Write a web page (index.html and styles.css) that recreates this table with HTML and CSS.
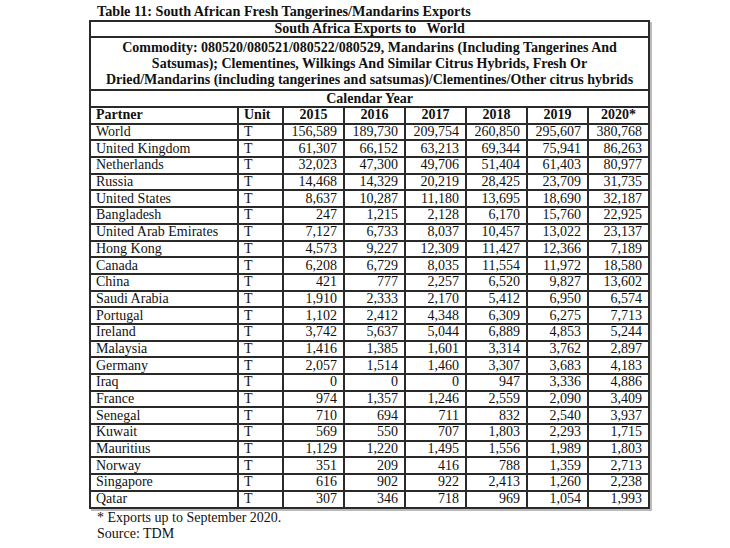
FILE: index.html
```html
<!DOCTYPE html>
<html>
<head>
<meta charset="utf-8">
<link rel="stylesheet" href="styles.css">
</head>
<body>
<div class="page">
  <div class="title">Table 11: South African Fresh Tangerines/Mandarins Exports</div>
  <table class="data">
    <colgroup>
      <col class="c-partner"><col class="c-unit"><col class="c-num"><col class="c-num"><col class="c-num"><col class="c-num"><col class="c-num"><col class="c-num">
    </colgroup>
    <tr class="r-top"><th colspan="8">South Africa Exports to&nbsp;&nbsp; World</th></tr>
    <tr class="r-comm"><th colspan="8">Commodity: 080520/080521/080522/080529, Mandarins (Including Tangerines And<br>Satsumas); Clementines, Wilkings And Similar Citrus Hybrids, Fresh Or<br>Dried/Mandarins (including tangerines and satsumas)/Clementines/Other citrus hybrids</th></tr>
    <tr class="r-cal"><th colspan="8">Calendar Year</th></tr>
    <tr class="r-head"><th class="left">Partner</th><th class="left">Unit</th><th>2015</th><th>2016</th><th>2017</th><th>2018</th><th>2019</th><th>2020*</th></tr>
    <tr><td>World</td><td>T</td><td class="n">156,589</td><td class="n">189,730</td><td class="n">209,754</td><td class="n">260,850</td><td class="n">295,607</td><td class="n">380,768</td></tr>
    <tr><td>United Kingdom</td><td>T</td><td class="n">61,307</td><td class="n">66,152</td><td class="n">63,213</td><td class="n">69,344</td><td class="n">75,941</td><td class="n">86,263</td></tr>
    <tr><td>Netherlands</td><td>T</td><td class="n">32,023</td><td class="n">47,300</td><td class="n">49,706</td><td class="n">51,404</td><td class="n">61,403</td><td class="n">80,977</td></tr>
    <tr><td>Russia</td><td>T</td><td class="n">14,468</td><td class="n">14,329</td><td class="n">20,219</td><td class="n">28,425</td><td class="n">23,709</td><td class="n">31,735</td></tr>
    <tr><td>United States</td><td>T</td><td class="n">8,637</td><td class="n">10,287</td><td class="n">11,180</td><td class="n">13,695</td><td class="n">18,690</td><td class="n">32,187</td></tr>
    <tr><td>Bangladesh</td><td>T</td><td class="n">247</td><td class="n">1,215</td><td class="n">2,128</td><td class="n">6,170</td><td class="n">15,760</td><td class="n">22,925</td></tr>
    <tr><td>United Arab Emirates</td><td>T</td><td class="n">7,127</td><td class="n">6,733</td><td class="n">8,037</td><td class="n">10,457</td><td class="n">13,022</td><td class="n">23,137</td></tr>
    <tr><td>Hong Kong</td><td>T</td><td class="n">4,573</td><td class="n">9,227</td><td class="n">12,309</td><td class="n">11,427</td><td class="n">12,366</td><td class="n">7,189</td></tr>
    <tr><td>Canada</td><td>T</td><td class="n">6,208</td><td class="n">6,729</td><td class="n">8,035</td><td class="n">11,554</td><td class="n">11,972</td><td class="n">18,580</td></tr>
    <tr><td>China</td><td>T</td><td class="n">421</td><td class="n">777</td><td class="n">2,257</td><td class="n">6,520</td><td class="n">9,827</td><td class="n">13,602</td></tr>
    <tr><td>Saudi Arabia</td><td>T</td><td class="n">1,910</td><td class="n">2,333</td><td class="n">2,170</td><td class="n">5,412</td><td class="n">6,950</td><td class="n">6,574</td></tr>
    <tr><td>Portugal</td><td>T</td><td class="n">1,102</td><td class="n">2,412</td><td class="n">4,348</td><td class="n">6,309</td><td class="n">6,275</td><td class="n">7,713</td></tr>
    <tr><td>Ireland</td><td>T</td><td class="n">3,742</td><td class="n">5,637</td><td class="n">5,044</td><td class="n">6,889</td><td class="n">4,853</td><td class="n">5,244</td></tr>
    <tr><td>Malaysia</td><td>T</td><td class="n">1,416</td><td class="n">1,385</td><td class="n">1,601</td><td class="n">3,314</td><td class="n">3,762</td><td class="n">2,897</td></tr>
    <tr><td>Germany</td><td>T</td><td class="n">2,057</td><td class="n">1,514</td><td class="n">1,460</td><td class="n">3,307</td><td class="n">3,683</td><td class="n">4,183</td></tr>
    <tr><td>Iraq</td><td>T</td><td class="n">0</td><td class="n">0</td><td class="n">0</td><td class="n">947</td><td class="n">3,336</td><td class="n">4,886</td></tr>
    <tr><td>France</td><td>T</td><td class="n">974</td><td class="n">1,357</td><td class="n">1,246</td><td class="n">2,559</td><td class="n">2,090</td><td class="n">3,409</td></tr>
    <tr><td>Senegal</td><td>T</td><td class="n">710</td><td class="n">694</td><td class="n">711</td><td class="n">832</td><td class="n">2,540</td><td class="n">3,937</td></tr>
    <tr><td>Kuwait</td><td>T</td><td class="n">569</td><td class="n">550</td><td class="n">707</td><td class="n">1,803</td><td class="n">2,293</td><td class="n">1,715</td></tr>
    <tr><td>Mauritius</td><td>T</td><td class="n">1,129</td><td class="n">1,220</td><td class="n">1,495</td><td class="n">1,556</td><td class="n">1,989</td><td class="n">1,803</td></tr>
    <tr><td>Norway</td><td>T</td><td class="n">351</td><td class="n">209</td><td class="n">416</td><td class="n">788</td><td class="n">1,359</td><td class="n">2,713</td></tr>
    <tr><td>Singapore</td><td>T</td><td class="n">616</td><td class="n">902</td><td class="n">922</td><td class="n">2,413</td><td class="n">1,260</td><td class="n">2,238</td></tr>
    <tr><td>Qatar</td><td>T</td><td class="n">307</td><td class="n">346</td><td class="n">718</td><td class="n">969</td><td class="n">1,054</td><td class="n">1,993</td></tr>
  </table>
  <div class="notes">
    <div>* Exports up to September 2020.</div>
    <div>Source: TDM</div>
  </div>
</div>
</body>
</html>
```

FILE: styles.css
```css
html, body {
  margin: 0;
  padding: 0;
  background: #ffffff;
}
body {
  font-family: "Liberation Serif", "Times New Roman", serif;
  font-size: 14px;
  color: #111;
}
.page {
  padding: 3px 0 0 89px;
}
.title {
  font-weight: bold;
  font-size: 14.2px;
  line-height: 17px;
  padding-left: 8px;
}
.data {
  border-collapse: collapse;
  table-layout: fixed;
  width: 559px;
  border: 2px solid #111;
  box-shadow: 2px 2px 0 #bbb;
}
.c-partner { width: 148px; }
.c-unit { width: 45px; }
.c-num { width: 61px; }
.data th, .data td {
  border: 2px solid #2a2a2a;
  padding: 0 5px;
  line-height: 14px;
  white-space: nowrap;
  text-align: left;
  vertical-align: middle;
}
.data th {
  font-weight: bold;
  text-align: center;
}
.data th.left {
  text-align: left;
}
.data td.n {
  text-align: right;
  padding-right: 6px;
}
.data tr { height: 16.7px; }
.data tr.r-top { height: 16px; }
.data tr.r-comm { height: 53px; }
.data tr.r-comm th { line-height: 16px; }
.data tr.r-cal { height: 17px; }
.notes {
  padding-left: 8px;
  line-height: 16px;
  padding-top: 1px;
}
```
